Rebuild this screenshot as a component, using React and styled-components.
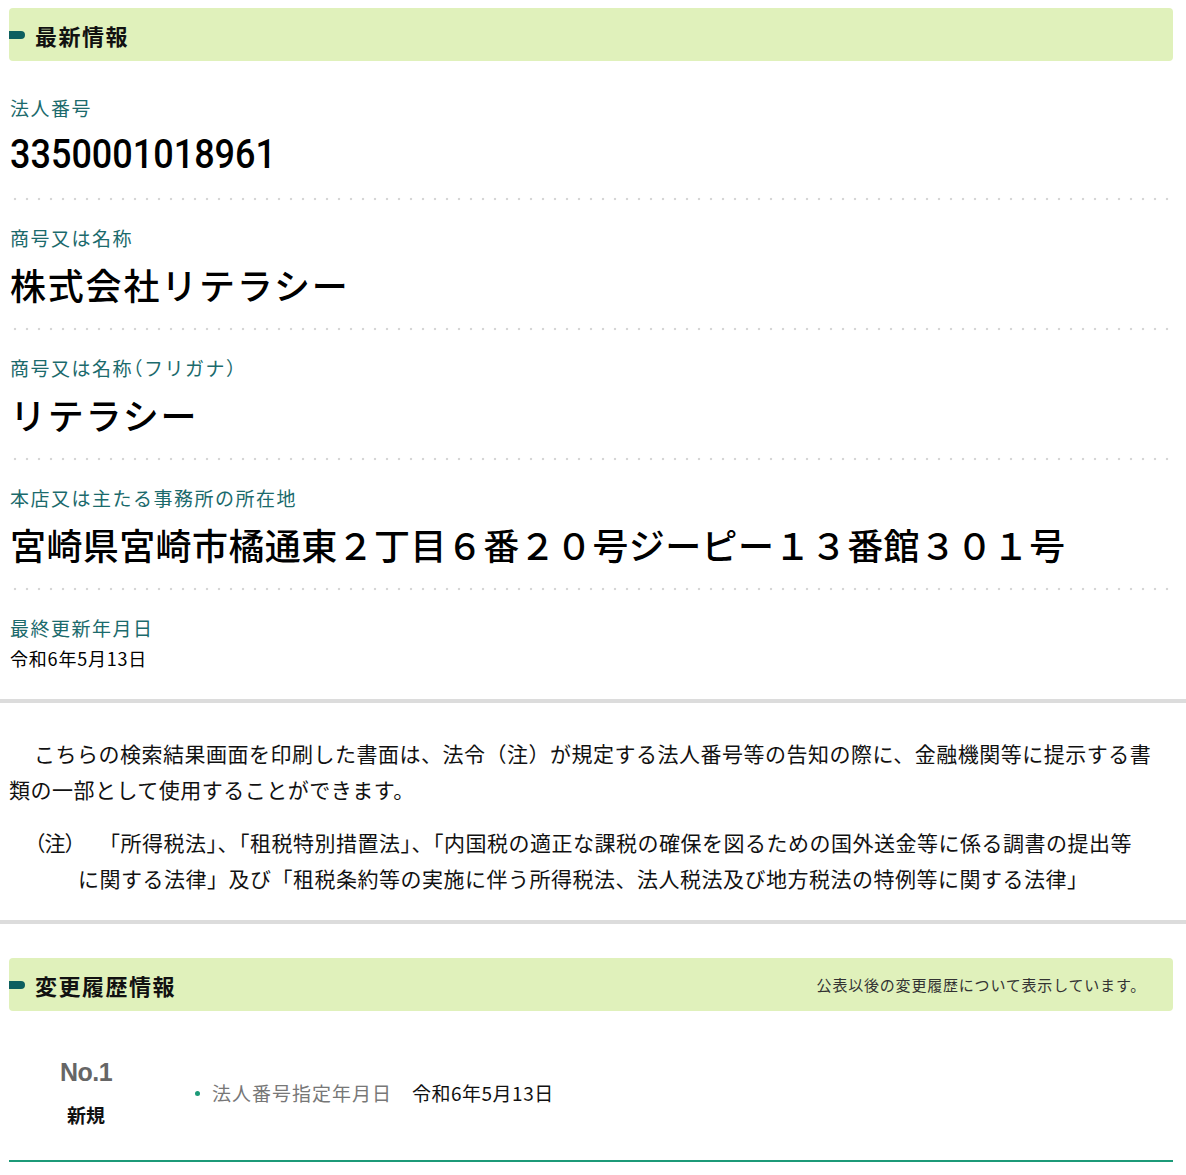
import React from 'react';
import styled, { createGlobalStyle } from 'styled-components';

const GlobalStyle = createGlobalStyle`
  body {
    margin: 0;
    background: #fff;
    font-family: "Noto Sans CJK JP", "Noto Sans", sans-serif;
    color: #111;
  }
`;

const Page = styled.div`
  width: 1186px;
  padding-top: 8px;
`;

const Inner = styled.div`
  padding: 0 13px 0 9px;
`;

const HeadBar = styled.div`
  height: 53px;
  background: #e0f1bb;
  border-radius: 4px;
  display: flex;
  align-items: center;
  justify-content: space-between;
  padding-right: 27px;
`;

const HeadTitle = styled.h2`
  margin: 0;
  display: flex;
  align-items: center;
  gap: 10px;
  font-size: 22px;
  font-weight: 700;
  color: #111;
  letter-spacing: 1.5px;
  line-height: 28px;
  &::before {
    content: '';
    width: 16px;
    height: 8px;
    background: #0d5f5f;
    border-radius: 0 4px 4px 0;
  }
`;

const HeadNote = styled.span`
  font-size: 15px;
  color: #333;
  letter-spacing: 0.8px;
`;

const Field = styled.div`
  padding: ${p => (p.$first ? '35px' : '25px')} 0 ${p => (p.$last ? '29px' : '23px')} 1px;
  background-image: ${p =>
    p.$last ? 'none' : 'radial-gradient(circle, #d6d6d6 1.3px, transparent 1.6px)'};
  background-size: 12px 4px;
  background-repeat: repeat-x;
  background-position: left bottom;
`;

const Label = styled.div`
  font-size: 19px;
  line-height: 24px;
  color: #1b6a6c;
  letter-spacing: 1.5px;
  font-feature-settings: "halt";
`;

const Value = styled.div`
  margin-top: ${p => (p.$small ? '6px' : '10px')};
  font-size: ${p => (p.$small ? '18px' : '36px')};
  line-height: ${p => (p.$small ? '24px' : '48px')};
  font-weight: ${p => (p.$small ? 400 : 500)};
  letter-spacing: ${p => (p.$num ? '0' : p.$small ? '0.8px' : p.$wide ? '0.4px' : '1.8px')};
  font-family: ${p => (p.$num ? 'Roboto, "Noto Sans CJK JP", sans-serif' : 'inherit')};
  color: #000;
  transform: ${p => (p.$num ? 'scaleY(1.15)' : 'none')};
  transform-origin: left center;
`;

const GrayRule = styled.hr`
  margin: 0;
  border: 0;
  height: 4px;
  background: #dcdcdc;
`;

const Notice = styled.div`
  padding: 32px 5px 24px 9px;
  font-size: 21px;
  line-height: 36px;
  letter-spacing: 0.5px;
  color: #111;
`;

const Lead = styled.p`
  margin: 0;
  text-indent: 25px;
`;

const Note = styled.p`
  margin: 17px 0 0;
  padding-left: 69px;
  text-indent: -43px;
`;

const NoteMark = styled.span`
  display: inline-block;
  width: 64px;
  text-indent: 0;
  letter-spacing: -1px;
  font-feature-settings: "halt";
`;

const History = styled.div`
  padding-top: 34px;
`;

const HistoryRow = styled.div`
  margin-top: 46px;
  display: grid;
  grid-template-columns: 176px 1fr;
  align-items: center;
  padding-bottom: 33px;
  border-bottom: 2px solid #1c9a78;
`;

const NoCell = styled.div`
  display: flex;
  flex-direction: column;
  align-items: center;
  width: 154px;
  gap: 16px;
`;

const NoText = styled.div`
  font-family: "Liberation Sans", Arial, sans-serif;
  font-size: 25px;
  font-weight: 700;
  color: #666;
  line-height: 30px;
  letter-spacing: -0.5px;
`;

const KindText = styled.div`
  font-size: 19px;
  font-weight: 700;
  line-height: 24px;
`;

const Item = styled.div`
  display: flex;
  align-items: center;
  font-size: 19px;
  line-height: 24px;
  margin-top: 2px;
  &::before {
    content: '';
    width: 5px;
    height: 5px;
    border-radius: 50%;
    background: #1c9a78;
    margin: 0 12px 0 10px;
  }
`;

const ItemKey = styled.span`
  color: #777;
  letter-spacing: 1px;
  margin-right: 20px;
`;

const ItemVal = styled.span`
  color: #111;
  letter-spacing: 0.5px;
`;

const fields = [
  { label: '法人番号', value: '3350001018961', num: true },
  { label: '商号又は名称', value: '株式会社リテラシー' },
  { label: '商号又は名称（フリガナ）', value: 'リテラシー' },
  { label: '本店又は主たる事務所の所在地', value: '宮崎県宮崎市橘通東２丁目６番２０号ジーピー１３番館３０１号', wide: true },
  { label: '最終更新年月日', value: '令和6年5月13日', small: true },
];

export default function App() {
  return (
    <Page>
      <GlobalStyle />
      <Inner>
        <HeadBar>
          <HeadTitle>最新情報</HeadTitle>
        </HeadBar>
        {fields.map((f, i) => (
          <Field key={f.label} $first={i === 0} $last={i === fields.length - 1}>
            <Label>{f.label}</Label>
            <Value $num={f.num} $small={f.small} $wide={f.wide}>{f.value}</Value>
          </Field>
        ))}
      </Inner>
      <GrayRule />
      <Notice>
        <Lead>
          こちらの検索結果画面を印刷した書面は、法令（注）が規定する法人番号等の告知の際に、金融機関等に提示する書<br />類の一部として使用することができます。
        </Lead>
        <Note>
          <NoteMark>（注）</NoteMark>「所得税法」、「租税特別措置法」、「内国税の適正な課税の確保を図るための国外送金等に係る調書の提出等<br />に関する法律」及び「租税条約等の実施に伴う所得税法、法人税法及び地方税法の特例等に関する法律」
        </Note>
      </Notice>
      <GrayRule />
      <Inner>
        <History>
          <HeadBar>
            <HeadTitle>変更履歴情報</HeadTitle>
            <HeadNote>公表以後の変更履歴について表示しています。</HeadNote>
          </HeadBar>
          <HistoryRow>
            <NoCell>
              <NoText>No.1</NoText>
              <KindText>新規</KindText>
            </NoCell>
            <Item>
              <ItemKey>法人番号指定年月日</ItemKey>
              <ItemVal>令和6年5月13日</ItemVal>
            </Item>
          </HistoryRow>
        </History>
      </Inner>
    </Page>
  );
}
